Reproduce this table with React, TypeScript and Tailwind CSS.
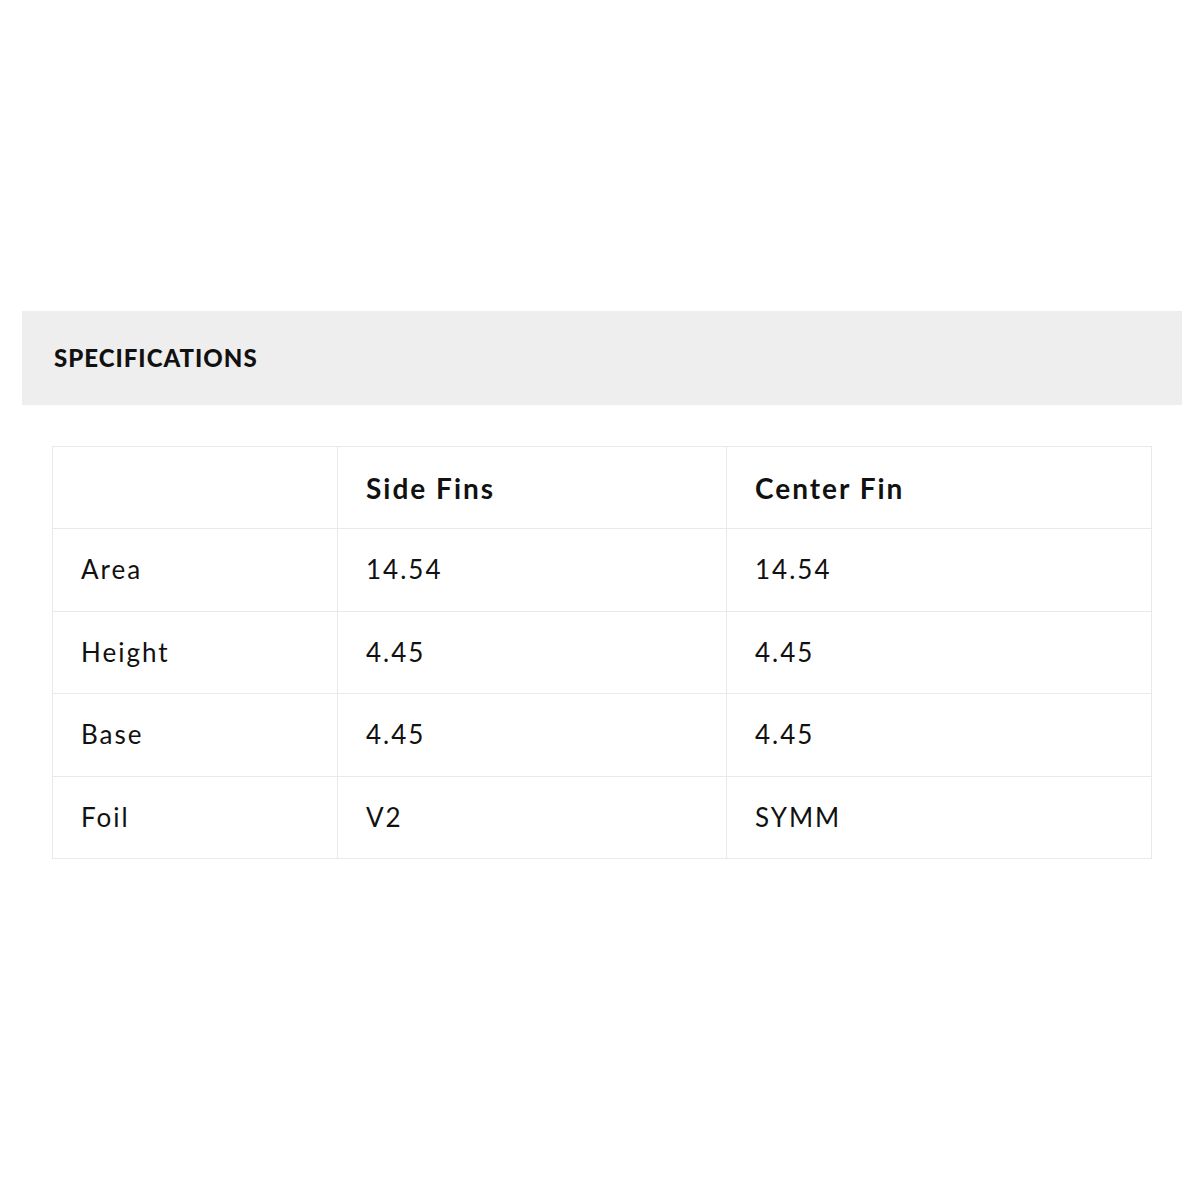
const rows = [
  { label: "Area", side: "14.54", center: "14.54" },
  { label: "Height", side: "4.45", center: "4.45" },
  { label: "Base", side: "4.45", center: "4.45" },
  { label: "Foil", side: "V2", center: "SYMM" },
];

export default function App() {
  return (
    <div className="min-h-[1200px] bg-white pt-[311px] text-[#111]" style={{ fontFamily: "Lato, 'Liberation Sans', sans-serif" }}>
      <div className="mx-[22px] w-[1160px]">
        <div className="flex h-[94px] items-center bg-[#eeeeee] px-8">
          <h2 className="text-[24px] font-black tracking-[1px]">SPECIFICATIONS</h2>
        </div>
        <div className="mx-[30px] mt-[41px]">
          <table className="w-full border-collapse border border-[#e9e9e9] text-[26px] tracking-[2px]">
            <thead>
              <tr className="h-[82px]">
                <th className="w-[285px] border border-[#e9e9e9]" />
                <th className="w-[389px] border border-[#e9e9e9] px-7 text-left text-[28px] font-bold">Side Fins</th>
                <th className="border border-[#e9e9e9] px-7 text-left text-[28px] font-bold">Center Fin</th>
              </tr>
            </thead>
            <tbody>
              {rows.map((r) => (
                <tr key={r.label} className="h-[82.6px]">
                  <td className="border border-[#e9e9e9] px-7">{r.label}</td>
                  <td className="border border-[#e9e9e9] px-7">{r.side}</td>
                  <td className="border border-[#e9e9e9] px-7">{r.center}</td>
                </tr>
              ))}
            </tbody>
          </table>
        </div>
      </div>
    </div>
  );
}
